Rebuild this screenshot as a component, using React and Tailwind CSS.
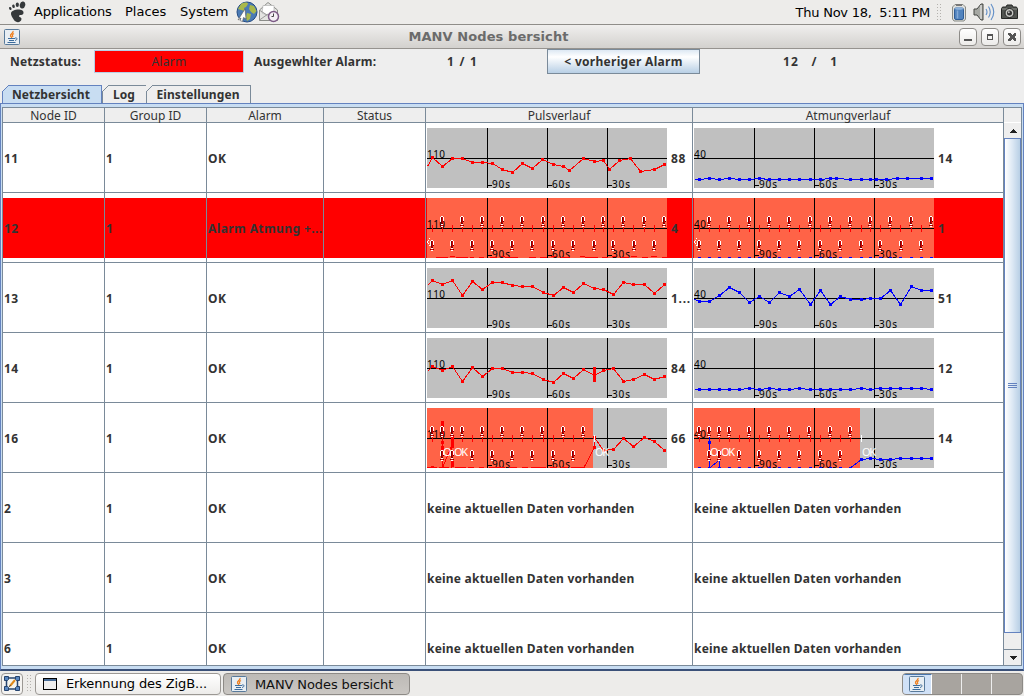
import React from "react";

const X = [5, 15, 25, 35, 45, 55, 65, 75, 85, 95, 105, 116, 126, 136, 146, 156, 167, 176, 186, 196, 206, 217, 227, 237];
const zip = (ys, xs = X) => ys.map((y, i) => [xs[i], y]);

const P11 = [[5, 29], [15, 38], [25, 30], [35, 30], [45, 34], [55, 34], [65, 35], [75, 41], [85, 44], [95, 35], [105, 40], [115, 31], [126, 36], [136, 38], [142, 42], [156, 30], [167, 33], [176, 32], [182, 41], [192, 32], [203, 30], [213, 43], [227, 41], [237, 36]];
const A11 = zip([51, 50, 51, 50, 51, 51, 50, 51, 51, 51, 51, 51, 51, 50, 50, 51, 51, 51, 51, 51, 50, 50, 50, 50], [5, 15, 25, 35, 45, 55, 65, 75, 85, 95, 105, 116, 126, 136, 142, 156, 167, 176, 182, 192, 203, 213, 227, 237]);
const P13 = zip([12, 16, 12, 27, 13, 21, 14, 14, 17, 18, 18, 24, 27, 19, 24, 15, 20, 21, 26, 14, 16, 16, 25, 16]);
const A13 = zip([33, 33, 27, 19, 24, 34, 28, 34, 24, 28, 21, 36, 22, 36, 28, 31, 31, 30, 30, 22, 36, 18, 22, 22]);
const P14 = zip([28, 32, 28, 43, 29, 38, 30, 30, 34, 34, 35, 41, 44, 35, 40, 31, 37, 32, 30, 43, 41, 36, 41, 38]);
const A14 = zip([51, 51, 51, 51, 51, 50, 51, 50, 51, 51, 50, 51, 51, 51, 51, 51, 50, 51, 50, 50, 50, 50, 50, 51]);

const BANGS_TOP = [15, 35, 55, 75, 95, 116, 136, 156, 176, 196, 217, 237];
const BANGS_BOTTOM = [5, 25, 45, 65, 85, 105, 126, 146, 167, 186, 207, 227];

function Bang({ x, y }) {
  return (
    <g transform={`translate(${x - 2} ${y})`}>
      <path d="M1 0h2v1h1v5h-1v2h-2v-2h-1v-5h1zM1 8h2v1h1v1h-1v1h-2v-1h-1v-1h1z" fill="#7c0000" />
      <path d="M1 0h2v1h-2zM0 1h1v5h-1zM1 8h2v1h-2zM1 10h2v1h-2z" fill="#fff" />
      <path d="M3 1h1v4h-1z" fill="#fff" />
      <path d="M2 1h1v6h-1zM1 9h2v1h-2z" fill="#d40000" />
    </g>
  );
}

function Series({ pts, color, start }) {
  const all = start === undefined ? pts : [[0, start], ...pts];
  return (
    <g>
      <polyline points={all.map((p) => `${p[0] + 0.5},${p[1] + 0.5}`).join(" ")} fill="none" stroke={color} strokeWidth="1" />
      {pts.map(([x, y], i) => <rect key={i} x={x - 1} y={y - 1} width="3" height="3" fill={color} />)}
    </g>
  );
}

function Chart({ label, alarmTo = 0, top = [], bottom = [], children }) {
  return (
    <svg width="240" height="60" viewBox="0 0 240 60" shapeRendering="crispEdges" className="block shrink-0 overflow-hidden font-normal tracking-normal">
      <rect width="240" height="60" fill="#c0c0c0" />
      {alarmTo > 0 && <rect width={alarmTo} height="60" fill="#ff6347" />}
      <g fill="#000">
        <rect x="60" width="1" height="60" />
        <rect x="120" width="1" height="60" />
        <rect x="180" width="1" height="60" />
        <rect y="30" width="240" height="1" />
      </g>
      <g fill="#000" fontFamily="Noto Sans, sans-serif" fontSize="10">
        <text x="0" y="30" textLength={label.length * 6}>{label}</text>
        {["90s", "60s", "30s"].map((t, i) => (
          <g key={t}>
            <rect x={61 + i * 60} y="57" width="4" height="1" />
            <text x={65 + i * 60} y="60" textLength="18">{t}</text>
          </g>
        ))}
      </g>
      {alarmTo > 0 && X.filter((x) => x < alarmTo - 5).map((x) => <rect key={x} x={x} y="27" width="1" height="7" fill="#f00" />)}
      {children}
      {top.map((x) => <Bang key={x} x={x} y={18} />)}
      {bottom.map((x) => <Bang key={x} x={x} y={42} />)}
    </svg>
  );
}

function Dashes({ color, to = 240 }) {
  return X.filter((x) => x < to).map((x) => <rect key={x} x={x - 1} y="59" width="3" height="1" fill={color} />);
}

function OkMark({ x, tick, text = "OK" }) {
  return (
    <g fill="#fff">
      {tick && <rect x={x - 1} y="27" width="1" height="7" />}
      <text x={x} y="48" fontSize="11" fontFamily="Noto Sans, sans-serif" textLength={text.length === 2 ? 14 : 8}>{text}</text>
    </g>
  );
}

const Start = () => <path d="M2.5 40L0.5 44L2.5 48" stroke="#fff" strokeDasharray="1 1" fill="none" />;

const charts = {
  p11: <Chart label="110"><Series pts={P11} color="#f00" start={38} /></Chart>,
  a11: <Chart label="40"><Series pts={A11} color="#00f" start={51} /></Chart>,
  p12: (
    <Chart label="110" alarmTo={240} top={BANGS_TOP} bottom={BANGS_BOTTOM}>
      <path d="M9 59.5H21M23 58.5H28M29 59.5H41M43 59.5H47M52 59.5H57M63 59.5H70M74 58.5H78M78 59.5H91M102 59.5H109M113 59.5H120M124 58.5H129M134 59.5H143M153 58.5H158M158 59.5H171M175 59.5H181M185 58.5H189M194 59.5H202M204 58.5H210M215 59.5H221M224 58.5H230M235 59.5H240" stroke="#f00" />
      <Start />
    </Chart>
  ),
  a12: (
    <Chart label="40" alarmTo={240} top={BANGS_TOP} bottom={BANGS_BOTTOM}>
      <Dashes color="#00f" />
      <Start />
    </Chart>
  ),
  p13: <Chart label="110"><Series pts={P13} color="#f00" start={17} /></Chart>,
  a13: <Chart label="40"><Series pts={A13} color="#00f" start={31} /></Chart>,
  p14: (
    <Chart label="110">
      <Series pts={P14} color="#f00" start={33} />
      <rect x="166" y="29" width="3" height="15" fill="#f00" />
    </Chart>
  ),
  a14: <Chart label="40"><Series pts={A14} color="#00f" start={51} /></Chart>,
  p16: (
    <Chart label="110" alarmTo={166} top={[5, 15, 25, 35, 55, 75, 95, 115, 136, 156]} bottom={[15, 25, 45, 65, 85, 105, 126, 146]}>
      <path d="M0 59.5H10M12 59.5H22M28 59.5H39M41 59.5H47M52 59.5H57M62 59.5H78M82 59.5H90M95 59.5H101M104 59.5H119M123 59.5H130M134 59.5H141M144 59.5H158" stroke="#f00" />
      <path d="M15.5 14V60L24.5 38V60" stroke="#f00" fill="none" />
      <path d="M14 13h3v15h-3zM14 33h3v3h-3zM14 38h3v4h-3zM24 28h3v12h-3zM24 53h3v6h-3zM4 58h3v2h-3z" fill="#f00" />
      <Series pts={[[167, 39], [167, 29], [176, 42], [186, 41], [196, 30], [206, 38], [217, 29], [227, 33], [237, 42]]} color="#f00" />
      <path d="M157 59.5L167.5 39.5" stroke="#f00" />
      <OkMark x={16} text="O" /><OkMark x={27} /><OkMark x={168} tick />
    </Chart>
  ),
  a16: (
    <Chart label="40" alarmTo={166} top={[5, 15, 25, 35, 55, 75, 95, 115, 136, 156]} bottom={[15, 25, 45, 65, 85, 105, 126, 146]}>
      <Dashes color="#00f" to={160} />
      <path d="M15.5 25V60L25.5 52V60" stroke="#00f" fill="none" />
      <rect x="14" y="33" width="3" height="3" fill="#00f" />
      <Series pts={[[167, 51], [176, 50], [186, 51], [196, 51], [206, 50], [217, 50], [227, 50], [237, 50]]} color="#00f" />
      <path d="M157 59.5L167.5 51.5" stroke="#00f" />
      <OkMark x={16} text="O" /><OkMark x={27} /><OkMark x={168} tick />
    </Chart>
  ),
};

const rows = [
  { id: "11", p: "88", a: "14" },
  { id: "12", p: "4", a: "1", alarm: true },
  { id: "13", p: "1...", a: "51" },
  { id: "14", p: "84", a: "12" },
  { id: "16", p: "66", a: "14" },
  { id: "2" },
  { id: "3" },
  { id: "6" },
];

const COLS = "grid grid-cols-[102px_102px_117px_102px_267px_311px] shrink-0";

function Cell({ children }) {
  return (
    <div className="flex min-w-0 items-center overflow-hidden border-r border-[#7a8a99] pl-px whitespace-nowrap">{children}</div>
  );
}

function Row({ r }) {
  const empty = <span className="pt-[2px]">keine aktuellen Daten vorhanden</span>;
  const bg = r.alarm ? "bg-[linear-gradient(#fff_5px,#f00_5px,#f00_65px,#fff_65px)]" : "bg-white";
  return (
    <div className={`${COLS} h-[70px] border-b border-[#7a8a99] ${bg} text-[12px] font-bold tracking-[0.22px] text-[#333]`}>
      <Cell><span className="pt-[2px] tracking-[0.5px]">{r.id}</span></Cell>
      <Cell><span className="pt-[2px]">1</span></Cell>
      <Cell><span className="pt-[2px] tracking-[0.4px]">{r.alarm ? "Alarm Atmung +..." : "OK"}</span></Cell>
      <Cell />
      <Cell>{r.p ? <>{charts["p" + r.id]}<span className="pt-[2px] pl-1 tracking-[0.7px]">{r.p}</span></> : empty}</Cell>
      <Cell>{r.a ? <>{charts["a" + r.id]}<span className="pt-[2px] pl-1 tracking-[0.7px]">{r.a}</span></> : empty}</Cell>
    </div>
  );
}

function JavaIcon() {
  return (
    <svg width="16" height="16" viewBox="0 0 16 16" className="shrink-0">
      <rect x=".5" y=".5" width="15" height="15" rx="1" fill="#e8eef3" stroke="#587a9b" />
      <path d="M9 2C10 4 6 5 6.500 7C7 8 8 8 7.500 9M10 4.500C8 5.500 8 6.500 9 8" stroke="#ef7d1a" strokeWidth="1.300" fill="none" />
      <path d="M4 9.500H11M5 11.500H10M3.500 13.500H11.500M11 9C14 8.500 13.500 11 11 11.500" stroke="#3c6c9c" fill="none" />
    </svg>
  );
}

function Foot() {
  return (
    <svg width="18" height="22" viewBox="0 0 18 22">
      <g fill="#35393b">
        <ellipse cx="14.500" cy="4" rx="2.700" ry="3.500" transform="rotate(15 14.500 4)" />
        <ellipse cx="9.300" cy="3.800" rx="1.600" ry="2.200" />
        <ellipse cx="5.500" cy="5.300" rx="1.300" ry="1.800" transform="rotate(-15 5.500 5.300)" />
        <ellipse cx="2.300" cy="7.500" rx="1.200" ry="1.600" transform="rotate(-25 2.300 7.500)" />
        <path d="M3 12C4 8 16 7 15.500 12C15 15 11.500 13 11 15C11 16.500 13.500 16 13.500 18C13 22 8 22 6 19C5 17 2.500 14.500 3 12Z" />
      </g>
    </svg>
  );
}

function Globe() {
  return (
    <svg width="22" height="22" viewBox="0 0 22 22">
      <circle cx="11" cy="11" r="10" fill="#4a7ab5" stroke="#244b82" />
      <path d="M5 3C8 1 12 1 12 3L10 6L8 7L9 10L5 9L2 8ZM14 4L18 5L20.500 10L18 13L15 11L13 8ZM11 12L15 13L14 18L11 20L10 16Z" fill="#a9b84a" />
      <path d="M2 19L9 8L10 18L7.500 16.500L6.500 20.500L4 19.500L5 17Z" fill="#fff" stroke="#555" strokeWidth=".6" />
    </svg>
  );
}

function Mail() {
  return (
    <svg width="22" height="22" viewBox="0 0 22 22">
      <path d="M1.500 9L10 1.500L19.500 9V19.500H1.500Z" fill="#e4e4e2" stroke="#8b8d89" />
      <path d="M5 4.500H16V13L10.500 15L4 12Z" fill="#fff" stroke="#aaa" strokeWidth=".6" />
      <path d="M1.500 19L10 13L16 17M2 9.500L9 14" stroke="#999" fill="none" />
      <circle cx="15.500" cy="15.500" r="5" fill="#f5f0f6" stroke="#7c5a86" strokeWidth="1.500" />
      <path d="M15.500 12.500V15.500H13.500" stroke="#444" fill="none" />
    </svg>
  );
}

function Grip({ className = "" }) {
  return (
    <svg width="5" height="17" viewBox="0 0 5 17" shapeRendering="crispEdges" className={className}>
      {[0, 3, 6, 9, 12, 15].map((y) => (
        <path key={y} d={`M0 ${y}h1v1h-1zM3 ${y}h1v1h-1z`} fill="#b4b2ae" />
      ))}
    </svg>
  );
}

function Battery() {
  return (
    <svg width="16" height="19" viewBox="0 0 16 19">
      <path d="M4 1.500H12L14.500 4V16L13 18H3L1.500 16V4Z" fill="#dedfdc" stroke="#888a85" />
      <rect x="3.500" y="5" width="9" height="11.500" rx="1.500" fill="#5183bd" stroke="#2f5d97" />
      <ellipse cx="8" cy="5.500" rx="4" ry="1.300" fill="#8eb3dc" />
      <path d="M6.500 7.500V15.500" stroke="#82a9d6" strokeWidth="1.500" />
      <rect x="5" y="1" width="6" height="2" fill="#777" />
    </svg>
  );
}

function Speaker() {
  return (
    <svg width="22" height="20" viewBox="0 0 22 20">
      <path d="M1 7H4L8 2H10V18H8L4 13H1Z" fill="#a6a8a3" stroke="#444643" />
      <path d="M8 3V17" stroke="#eee" />
      <path d="M13 7Q15 10 13 13M15.500 4.500Q19 10 15.500 15.500M18 2Q23.500 10 18 18" stroke="#5f8dc7" fill="none" strokeWidth="1.100" />
    </svg>
  );
}

function Camera() {
  return (
    <svg width="17" height="16" viewBox="0 0 17 16">
      <path d="M5 3L6 1H11L12 3H15.500L16.500 5V14.500H.5V5L1.500 3Z" fill="#50534f" stroke="#252725" />
      <path d="M1 5H16" stroke="#8b8e89" />
      <circle cx="8.500" cy="9" r="4.500" fill="#c6c8c3" stroke="#222" />
      <circle cx="8.500" cy="9" r="2.500" fill="#333" />
      <circle cx="7.800" cy="8.200" r="1" fill="#bbb" />
    </svg>
  );
}

function WinButton({ children }) {
  return (
    <div className="flex h-[18px] w-[18px] items-center justify-center rounded-[4px] border border-[#8d8b88] bg-linear-to-b from-white to-[#ecebe9]">
      <svg width="10" height="10" viewBox="0 0 10 10" shapeRendering="crispEdges">{children}</svg>
    </div>
  );
}

function Tab({ children, w, edge = "", active }) {
  return (
    <div className={`relative h-[18px] shrink-0 ${w} ${edge}`}>
      <svg className="absolute inset-0 h-full w-full" shapeRendering="crispEdges">
        <path d="M0.500 19V6.500L6.500 0.500H400V19Z" fill={active ? "#c8ddf2" : "#eeeeee"} stroke={active ? "#6382bf" : "#7a8a99"} />
      </svg>
      <div className="relative flex h-full items-center justify-center pt-px">{children}</div>
    </div>
  );
}

export default function App() {
  return (
    <div className="flex h-[696px] w-[1024px] flex-col overflow-hidden bg-[#eeeeee] font-['Noto_Sans',sans-serif] text-[#333]">
      <header className="flex h-[25px] shrink-0 items-center border-b border-[#8f8d89] bg-[#edecea] pl-[8px] font-['DejaVu_Sans',sans-serif] text-[13px] whitespace-nowrap text-black">
        <div className="w-[26px]"><Foot /></div>
        <span className="w-[91px] tracking-[-0.15px]">Applications</span>
        <span className="w-[55px]">Places</span>
        <span className="w-[56px]">System</span>
        <Globe />
        <Mail />
        <div className="ml-auto flex items-center pr-[6px]">
          <span className="pt-px tracking-[-0.25px] whitespace-pre">Thu Nov 18,  5:11 PM</span>
          <Grip className="mr-[9px] ml-[7px]" />
          <Battery />
          <span className="mr-[6px] ml-[6px]"><Speaker /></span>
          <Camera />
        </div>
      </header>

      <div className="flex h-[24px] shrink-0 items-center border-b border-[#96938f] bg-linear-to-b from-[#f0efee] to-[#d3d1ce] pr-[3px] pl-[4px]">
        <JavaIcon />
        <span className="flex-1 pt-px pr-[2px] text-center font-['DejaVu_Sans',sans-serif] text-[13px] font-bold tracking-[0.08px] text-[#6b6b6b]">MANV Nodes bersicht</span>
        <div className="flex gap-[4px]">
          <WinButton><rect x="1" y="7" width="8" height="2" fill="#555" /></WinButton>
          <WinButton><path d="M2 2h6v6h-6zM3 4v3h4v-3z" fillRule="evenodd" fill="#555" /></WinButton>
          <WinButton><path d="M1 1h2l2 2l2-2h2v2l-2 2l2 2v2h-2l-2-2l-2 2h-2v-2l2-2l-2-2z" fill="#555" /></WinButton>
        </div>
      </div>

      <section className="flex h-[36px] shrink-0 items-start text-[12px] leading-[26px] font-bold tracking-[0.2px] whitespace-pre">
        <span className="w-[84px] shrink-0 pl-[10px]">Netzstatus:</span>
        <div className="mt-px ml-[10px] h-[23px] w-[150px] shrink-0 border border-[#b8cfe5] bg-[#f00] text-center leading-[22px] font-normal tracking-[0.3px]">Alarm</div>
        <span className="w-[193px] shrink-0 pl-[10px]">Ausgewhlter Alarm:</span>
        <span className="w-[110px] shrink-0 pl-[10px] tracking-[1.2px]">1 / 1</span>
        <button className="h-[25px] w-[153px] shrink-0 border border-[#7a8a99] bg-linear-to-b from-[#dde8f3] via-white via-30% to-[#b8cfe5] leading-[23px] tracking-[0.3px]">&lt; vorheriger Alarm</button>
        <span className="pl-[83px] tracking-[1.1px]">12   /   1</span>
      </section>

      <nav className="flex h-[18px] shrink-0 pl-[2px] text-[12px] font-bold tracking-[0.1px]">
        <Tab w="w-[100px]" edge="border-r border-[#6382bf] pr-px" active>Netzbersicht</Tab>
        <Tab w="w-[44px]">Log</Tab>
        <Tab w="w-[105px]" edge="border-r border-[#7a8a99]">Einstellungen</Tab>
      </nav>

      <main className="flex h-[568px] shrink-0 flex-col border border-b-2 border-[#6382bf] border-b-[#3a5078] bg-[#c8ddf2] px-px pt-[3px] pb-[3px]">
        <div className="flex min-h-0 flex-1 border border-[#7a8a99] bg-white">
          <div className="flex w-[1001px] shrink-0 flex-col overflow-hidden">
            <div className={`${COLS} h-[15px] border-b border-[#7a8a99] bg-[#eeeeee] text-[12px] leading-[16px]`}>
              {["Node ID", "Group ID", "Alarm", "Status", "Pulsverlauf", "Atmungverlauf"].map((h) => (
                <div key={h} className="border-r border-[#7a8a99] text-center">{h}</div>
              ))}
            </div>
            {rows.map((r) => <Row key={r.id} r={r} />)}
          </div>
          <div className="flex min-w-0 flex-1 flex-col bg-[#eeeeee]">
            <div className="h-[15px] shrink-0 border-b border-white" />
            <div className="flex h-[15px] shrink-0 items-center justify-center">
              <svg width="8" height="4" shapeRendering="crispEdges"><path d="M0 4L4 0L8 4Z" fill="#222" /></svg>
            </div>
            <div className="flex h-[495px] shrink-0 items-center justify-center border border-[#6382bf] bg-linear-to-r from-white via-[#dce8f4] to-[#b8cfe5]">
              <svg width="9" height="6" shapeRendering="crispEdges"><path d="M0 .5H9M0 2.500H9M0 4.500H9" stroke="#6382bf" /></svg>
            </div>
            <div className="flex-1" />
            <div className="flex h-[16px] shrink-0 items-center justify-center border-t border-[#7a8a99]">
              <svg width="8" height="4" shapeRendering="crispEdges"><path d="M0 0L4 4L8 0Z" fill="#222" /></svg>
            </div>
          </div>
        </div>
      </main>

      <footer className="flex h-[25px] shrink-0 items-center bg-[#edecea] pl-px font-['DejaVu_Sans',sans-serif] text-[13px] tracking-[-0.1px] whitespace-nowrap text-black">
        <div className="flex h-[22px] w-[22px] items-center justify-center rounded-[4px] border border-[#9b9894] bg-[#f4f3f1]">
          <svg width="16" height="15" viewBox="0 0 16 15">
            <rect x="2.500" y="2" width="11" height="11" fill="#f5f5ef" stroke="#26446f" strokeWidth="1.500" />
            <g fill="#5a87c0" stroke="#26446f"><path d="M.5 .5h4v3l-1 1h-3zM11.500 .5h4v4h-3l-1-1zM.5 10.500h3l1 1v3h-4zM12.500 10.500h3v4h-4v-3z" /></g>
            <path d="M6 10L11 4" stroke="#e08a1c" strokeWidth="2" /><path d="M5 11l1.500-2" stroke="#444" />
          </svg>
        </div>
        <Grip className="mr-[3px] ml-[4px]" />
        <div className="flex h-[22px] w-[186px] items-center rounded-[4px] border border-[#9b9894] bg-linear-to-b from-white to-[#edecea] pl-[7px]">
          <svg width="14" height="12" shapeRendering="crispEdges"><rect x=".5" y=".5" width="13" height="11" fill="#eee" stroke="#000" /><rect x="1" y="1" width="12" height="2" fill="#456a96" /></svg>
          <span className="pt-px pl-[9px]">Erkennung des ZigB...</span>
        </div>
        <div className="ml-[2px] flex h-[22px] w-[187px] items-center rounded-[4px] border border-[#8d8a86] bg-linear-to-b from-[#bdbab6] to-[#cac7c3] pl-[7px]">
          <JavaIcon />
          <span className="pt-[2px] pl-[8px] text-[#111]">MANV Nodes bersicht</span>
        </div>
        <div className="mr-px ml-auto flex h-[22px] w-[121px] overflow-hidden rounded-[4px] border border-[#8d8a86] bg-[#a8a49f]">
          <div className="flex w-[29px] items-center justify-center border-t border-r border-t-[#4a76ab] border-r-white bg-[#d0e1f7]"><JavaIcon /></div>
          <div className="w-[30px] border-r border-[#eee]" />
          <div className="w-[30px] border-r border-[#eee]" />
        </div>
      </footer>
    </div>
  );
}
